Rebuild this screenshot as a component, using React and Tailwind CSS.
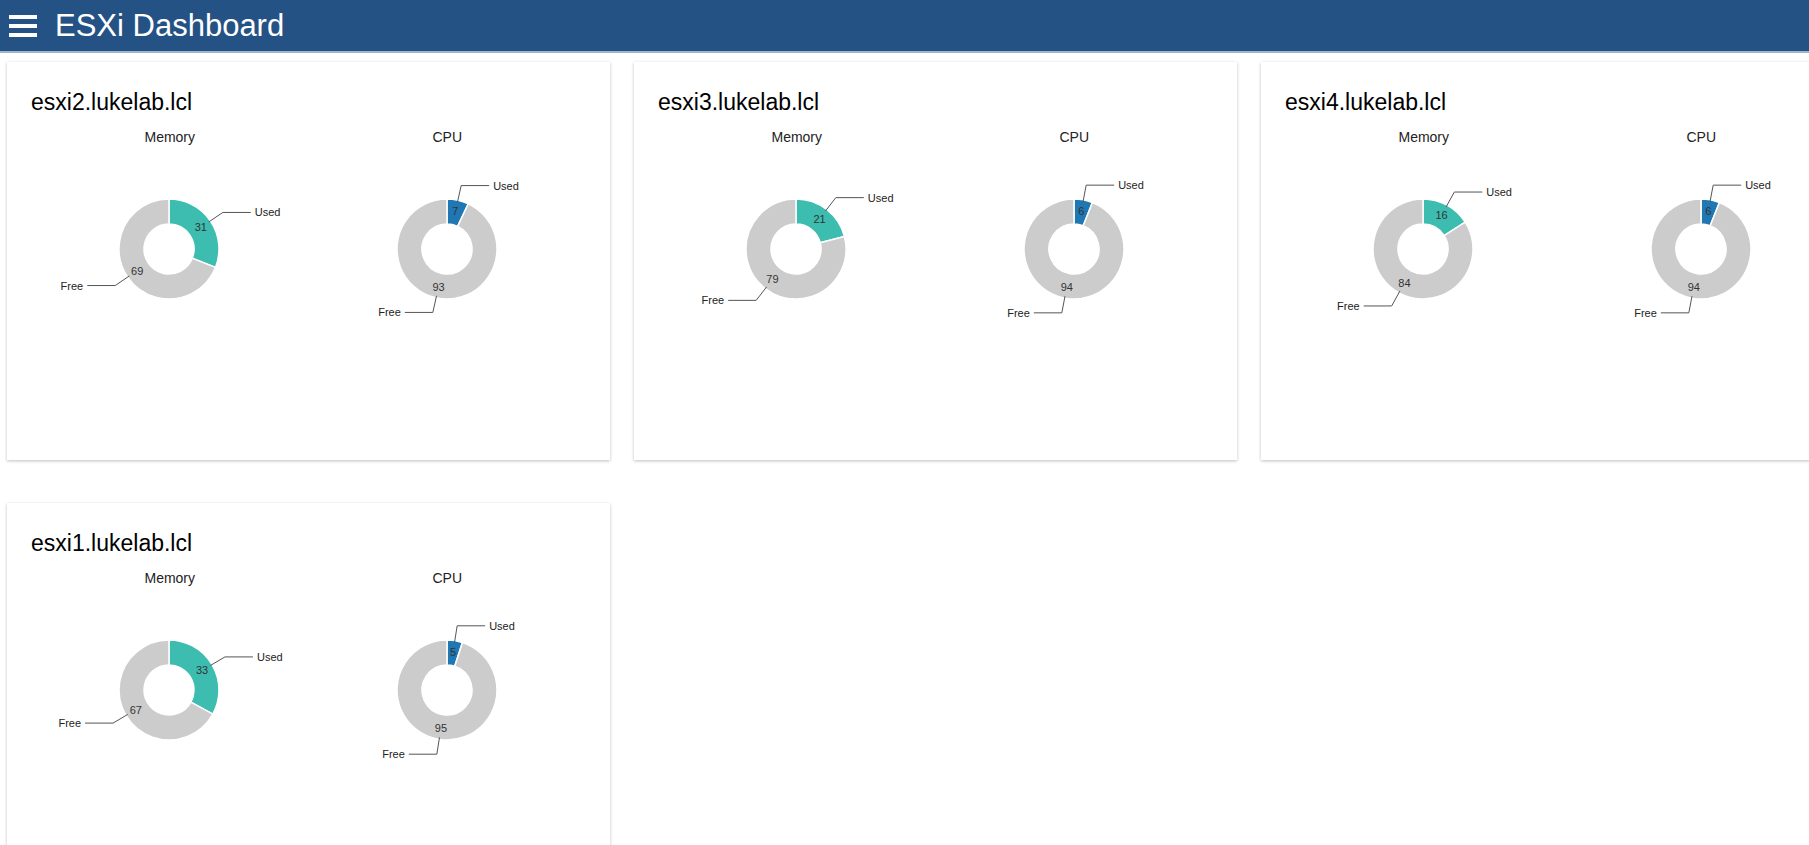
const hosts = [
  { name: 'esxi2.lukelab.lcl', mem: 31, cpu: 7 },
  { name: 'esxi3.lukelab.lcl', mem: 21, cpu: 6 },
  { name: 'esxi4.lukelab.lcl', mem: 16, cpu: 6 },
  { name: 'esxi1.lukelab.lcl', mem: 33, cpu: 5 },
]

const R = 50
const r = 25
const CX = 138
const CY = 102

function pt(rad, frac) {
  const a = frac * Math.PI * 2
  return [CX + rad * Math.sin(a), CY - rad * Math.cos(a)]
}

function arc(f0, f1) {
  const large = f1 - f0 > 0.5 ? 1 : 0
  const [x0, y0] = pt(R, f0)
  const [x1, y1] = pt(R, f1)
  const [x2, y2] = pt(r, f1)
  const [x3, y3] = pt(r, f0)
  return `M${x0},${y0} A${R},${R} 0 ${large} 1 ${x1},${y1} L${x2},${y2} A${r},${r} 0 ${large} 0 ${x3},${y3} Z`
}

function Leader({ f0, f1, label }) {
  const mid = (f0 + f1) / 2
  const [sx, sy] = pt(R - 2, mid)
  const [ex, ey] = pt(R * 1.3, mid)
  const right = Math.sin(mid * Math.PI * 2) >= 0
  const hx = right ? ex + 28 : ex - 28
  return (
    <g>
      <polyline points={`${sx},${sy} ${ex},${ey} ${hx},${ey}`} fill="none" stroke="#555" strokeWidth="1" />
      <text x={right ? hx + 4 : hx - 4} y={ey + 4} fontSize="11" textAnchor={right ? 'start' : 'end'} fill="#222">{label}</text>
    </g>
  )
}

function Donut({ used, color }) {
  const u = used / 100
  const [ux, uy] = pt((R + r) / 2 + 1, u / 2)
  const [fx, fy] = pt((R + r) / 2 + 1, (u + 1) / 2)
  return (
    <svg width="277" height="200" className="block">
      <path d={arc(0, u)} fill={color} stroke="#fff" strokeWidth="1.5" strokeLinejoin="round" />
      <path d={arc(u, 1)} fill="#cccccc" stroke="#fff" strokeWidth="1.5" strokeLinejoin="round" />
      <text x={ux} y={uy + 4} fontSize="11" textAnchor="middle" fill="#333">{used}</text>
      <text x={fx} y={fy + 4} fontSize="11" textAnchor="middle" fill="#333">{100 - used}</text>
      <Leader f0={0} f1={u} label="Used" />
      <Leader f0={u} f1={1} label="Free" />
    </svg>
  )
}

function Chart({ title, used, color }) {
  return (
    <div className="flex flex-col items-center">
      <div className="text-[14px] text-[#222] leading-[20px]">{title}</div>
      <Donut used={used} color={color} />
    </div>
  )
}

function HostCard({ host }) {
  return (
    <div className="bg-white h-[398px] shadow-[0_1px_3px_rgba(0,0,0,0.25)] px-[24px] pt-[26px]">
      <h2 className="text-[23px] text-black leading-[28px] mb-[11px]">{host.name}</h2>
      <div className="grid grid-cols-2">
        <Chart title="Memory" used={host.mem} color="#3dbdb0" />
        <Chart title="CPU" used={host.cpu} color="#1f77b4" />
      </div>
    </div>
  )
}

export default function App() {
  return (
    <div className="w-[1809px] h-[845px] overflow-hidden bg-white" style={{ fontFamily: '"Liberation Sans", Arial, sans-serif' }}>
      <header className="h-[53px] bg-[#245284] border-b-2 border-[#9fb4cc] flex items-center">
        <div className="flex flex-col gap-[5px] ml-[9px] mr-[18px]">
          <span className="block w-[28px] h-[4px] bg-white" />
          <span className="block w-[28px] h-[4px] bg-white" />
          <span className="block w-[28px] h-[4px] bg-white" />
        </div>
        <h1 className="text-white text-[31px] leading-none">ESXi Dashboard</h1>
      </header>
      <div className="grid grid-cols-[603px_603px_603px] gap-x-[24px] gap-y-[43px] pl-[7px] pt-[9px]">
        {hosts.map(h => <HostCard key={h.name} host={h} />)}
      </div>
    </div>
  )
}
